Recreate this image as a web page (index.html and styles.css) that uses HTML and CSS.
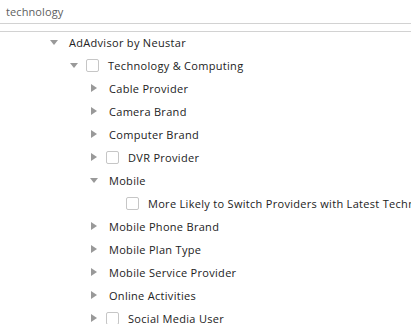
FILE: index.html
```html
<!DOCTYPE html>
<html>
<head>
<meta charset="utf-8">
<link rel="stylesheet" href="styles.css">
</head>
<body>
<div class="search"><span class="search-text">technology</span></div>
<div class="tree">
  <div class="row l1"><span class="toggle"><i class="tri-down"></i></span><span class="label">AdAdvisor by Neustar</span></div>
  <div class="row l2"><span class="toggle"><i class="tri-down"></i></span><span class="check"></span><span class="label">Technology &amp; Computing</span></div>
  <div class="row l3"><span class="toggle"><i class="tri-right"></i></span><span class="label">Cable Provider</span></div>
  <div class="row l3"><span class="toggle"><i class="tri-right"></i></span><span class="label">Camera Brand</span></div>
  <div class="row l3"><span class="toggle"><i class="tri-right"></i></span><span class="label">Computer Brand</span></div>
  <div class="row l3"><span class="toggle"><i class="tri-right"></i></span><span class="check"></span><span class="label">DVR Provider</span></div>
  <div class="row l3"><span class="toggle"><i class="tri-down"></i></span><span class="label">Mobile</span></div>
  <div class="row l4"><span class="toggle"></span><span class="check"></span><span class="label">More Likely to Switch Providers with Latest Technology</span></div>
  <div class="row l3"><span class="toggle"><i class="tri-right"></i></span><span class="label">Mobile Phone Brand</span></div>
  <div class="row l3"><span class="toggle"><i class="tri-right"></i></span><span class="label">Mobile Plan Type</span></div>
  <div class="row l3"><span class="toggle"><i class="tri-right"></i></span><span class="label">Mobile Service Provider</span></div>
  <div class="row l3"><span class="toggle"><i class="tri-right"></i></span><span class="label">Online Activities</span></div>
  <div class="row l3"><span class="toggle"><i class="tri-right"></i></span><span class="check"></span><span class="label">Social Media User</span></div>
</div>
</body>
</html>
```
FILE: styles.css
```css
html, body {
  margin: 0;
  padding: 0;
  background: #fff;
  overflow: hidden;
}
body {
  font-family: "Open Sans", "DejaVu Sans", sans-serif;
  width: 411px;
  height: 324px;
}
.search {
  height: 24px;
  box-sizing: border-box;
  border-bottom: 1px solid #d2d2d2;
  display: flex;
  align-items: center;
  padding-left: 6px;
}
.search-text {
  font-size: 11px;
  color: #606060;
  letter-spacing: 0.1px;
}
.tree {
  margin-top: 7px;
  border-top: 1px solid #d2d2d2;
}
.row {
  height: 23px;
  box-sizing: border-box;
  padding-bottom: 3px;
  display: flex;
  align-items: center;
  white-space: nowrap;
  overflow: hidden;
}
.l1 { padding-left: 49px; }
.l2 { padding-left: 69px; }
.l3 { padding-left: 89px; }
.l4 { padding-left: 109px; }
.toggle {
  width: 9px;
  height: 9px;
  flex: none;
  display: flex;
  align-items: center;
  justify-content: center;
}
.tri-down {
  width: 0;
  height: 0;
  border-left: 4.5px solid transparent;
  border-right: 4.5px solid transparent;
  border-top: 5px solid #999;
}
.tri-right {
  width: 0;
  height: 0;
  border-top: 4.5px solid transparent;
  border-bottom: 4.5px solid transparent;
  border-left: 6px solid #999;
}
.check {
  flex: none;
  width: 13px;
  height: 13px;
  box-sizing: border-box;
  border: 1px solid #c6c6c6;
  border-radius: 2px;
  background: #fff;
  margin-left: 8px;
}
.label {
  font-size: 11px;
  color: #222;
  margin-left: 11px;
  letter-spacing: 0.3px;
}
.check + .label {
  margin-left: 9px;
}
```
